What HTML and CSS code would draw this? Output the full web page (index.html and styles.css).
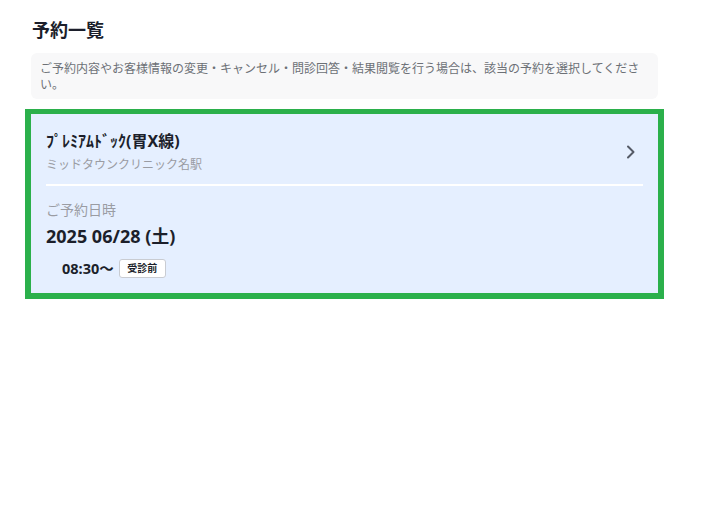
FILE: index.html
```html
<!DOCTYPE html>
<html lang="ja">
<head>
    <meta charset="UTF-8">
    <meta name="viewport" content="width=device-width, initial-scale=1.0">
    <title>予約一覧</title>
    <link rel="stylesheet" href="styles.css">
</head>
<body>
    <main class="page">
        <h1 class="page-title">予約一覧</h1>

        <!-- Notice -->
        <p class="notice">ご予約内容やお客様情報の変更・キャンセル・問診回答・結果閲覧を行う場合は、該当の予約を選択してください。</p>

        <!-- Reservation card -->
        <a href="#" class="reserve-card">
            <div class="card-head">
                <div class="course">
                    <div class="course-name">ﾌﾟﾚﾐｱﾑﾄﾞｯｸ(胃X線)</div>
                    <div class="clinic">ミッドタウンクリニック名駅</div>
                </div>
                <svg class="chevron" width="12" height="14" viewBox="0 0 12 14">
                    <polyline points="5,1.5 10.5,7 5,12.5" fill="none" stroke="#555a66" stroke-width="2" stroke-linecap="round" stroke-linejoin="round"/>
                </svg>
            </div>
            <div class="divider"></div>
            <div class="label">ご予約日時</div>
            <div class="date">2025 06/28 (土)</div>
            <div class="time-row">
                <span class="time">08:30〜</span>
                <span class="badge">受診前</span>
            </div>
        </a>
    </main>
</body>
</html>
```

FILE: styles.css
```css
/* General Styles */
body {
    margin: 0;
    font-family: "Noto Sans", "Noto Sans CJK JP", sans-serif;
    background: #ffffff;
    color: #1c1f2b;
}

.page {
    width: 627px;
    padding: 17px 0 20px 31px;
}

.page-title {
    margin: 0 0 10px 1px;
    font-size: 18px;
    line-height: 26px;
    font-weight: 700;
}

.notice {
    margin: 0;
    padding: 8px 8px 6px 9px;
    background: #f8f8f9;
    border-radius: 6px;
    font-size: 12px;
    line-height: 16px;
    color: #6c7076;
}

/* Reservation card */
.reserve-card {
    display: block;
    margin: 10px -6px 0 -6px;
    padding: 15px 15px 15px 15px;
    background: #e5efff;
    border: 6px solid #2bb04b;
    border-top-width: 5px;
    color: inherit;
    text-decoration: none;
}

.card-head {
    display: flex;
    align-items: center;
    justify-content: space-between;
}

.course-name {
    font-size: 16px;
    line-height: 24px;
    font-weight: 700;
}

.clinic {
    margin-top: 3px;
    font-size: 12px;
    line-height: 18px;
    color: #9a9ca3;
}

.chevron {
    margin-right: 8px;
}

.divider {
    height: 2px;
    margin-top: 10px;
    background: #ffffff;
}

.label {
    margin-top: 14px;
    font-size: 14px;
    line-height: 20px;
    color: #9a9ca3;
}

.date {
    margin-top: 3px;
    font-size: 18px;
    line-height: 26px;
    font-weight: 700;
}

.time-row {
    display: flex;
    align-items: center;
    gap: 5px;
    margin-top: 10px;
    padding-left: 16px;
}

.time {
    font-size: 14.5px;
    font-weight: 700;
    line-height: 19px;
}

.badge {
    height: 17px;
    padding: 0 7.5px;
    background: #ffffff;
    border: 1px solid #c9ccd2;
    border-radius: 3px;
    font-size: 10px;
    font-weight: 700;
    line-height: 17px;
}
```
